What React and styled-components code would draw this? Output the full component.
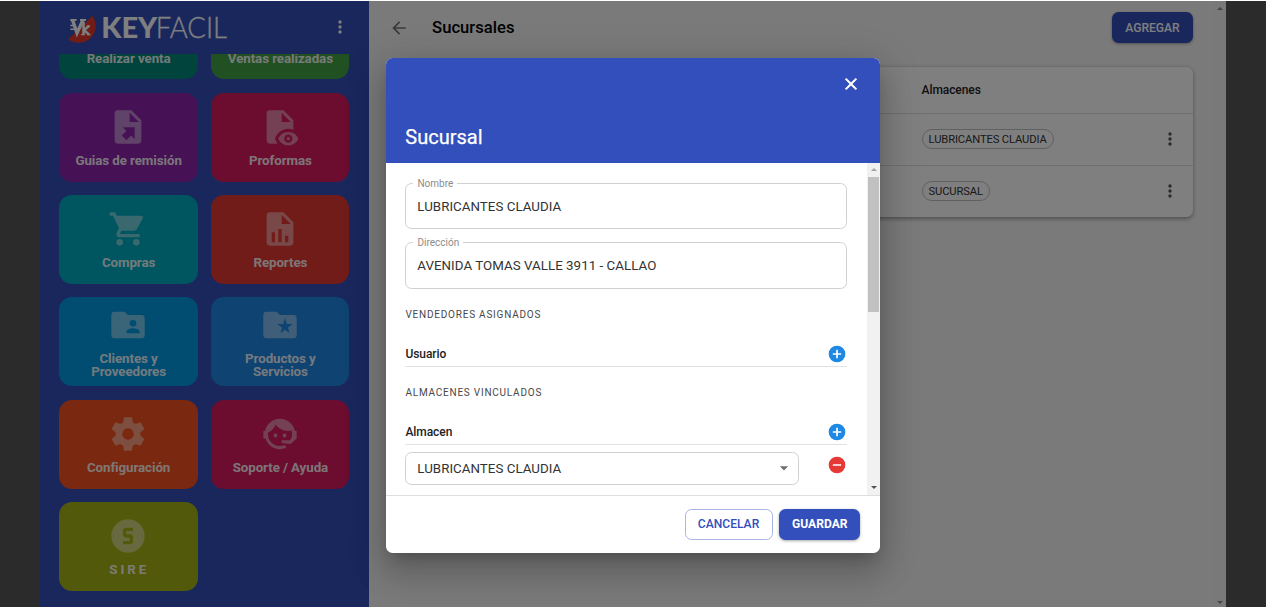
import React from "react";
import styled, { createGlobalStyle } from "styled-components";

const GlobalStyle = createGlobalStyle`
  *, *::before, *::after { box-sizing: border-box; }
  html, body { margin: 0; padding: 0; overflow: hidden; background: #fff; }
  body { font-family: Roboto, "Liberation Sans", sans-serif; }
`;

const FILE = "M6 2H14L20 8V20A2 2 0 0 1 18 22H6A2 2 0 0 1 4 20V4A2 2 0 0 1 6 2ZM13 3.5V9H18.5Z";
const FOLDER = "M20 6H12L10 4H4A2 2 0 0 0 2 6V18A2 2 0 0 0 4 20H20A2 2 0 0 0 22 18V8A2 2 0 0 0 20 6Z";

const paths = {
  fileExport: FILE + "M8.93 12.22H16V19.29L13.88 17.17L11.05 20L8.22 17.17L11.05 14.35Z",
  fileEye:
    "M17 18A1 1 0 0 1 17 20A1 1 0 0 1 17 18M17 15C14.27 15 11.94 16.66 11 19C11.94 21.34 14.27 23 17 23C19.73 23 22.06 21.34 23 19C22.06 16.66 19.73 15 17 15M17 21.5A2.5 2.5 0 0 1 17 16.5A2.5 2.5 0 0 1 17 21.5M9.27 19.7L9 19L9.27 18.31C10.47 15.14 13.5 13 17 13C18.05 13 19.07 13.21 20 13.58V8L14 2H6A2 2 0 0 0 4 4V20A2 2 0 0 0 6 22H10.5C9.99 21.41 9.57 20.5 9.27 19.7M13 3.5L18.5 9H13Z",
  cart:
    "M17 18A2 2 0 1 1 17 22A2 2 0 0 1 17 18M1 2H4.27L5.21 4H20A1 1 0 0 1 21 5C21 5.17 20.95 5.34 20.88 5.5L17.3 11.97C16.96 12.58 16.3 13 15.55 13H8.1L7.2 14.63L7.17 14.75A.25 .25 0 0 0 7.42 15H19V17H7A2 2 0 0 1 5 15C5 14.65 5.09 14.32 5.24 14.04L6.6 11.59L3 4H1V2M7 18A2 2 0 1 1 7 22A2 2 0 0 1 7 18Z",
  fileChart: FILE + "M7 20H9V14H7ZM11 20H13V12H11ZM15 20H17V16H15Z",
  folderAccount:
    FOLDER + "M19 17H11V16C11 14.67 13.67 14 15 14C16.33 14 19 14.67 19 16ZM15 9A2 2 0 0 1 15 13A2 2 0 0 1 15 9Z",
  folderStar:
    FOLDER + "M17.8 17L15 14.9L12.2 17L13.22 13.6L10.4 11.4H13.88L15 7.8L16.12 11.4H19.6L16.78 13.6Z",
  cog:
    "M12 15.5A3.5 3.5 0 0 1 12 8.5A3.5 3.5 0 0 1 12 15.5M19.43 12.97C19.47 12.65 19.5 12.33 19.5 12C19.5 11.67 19.47 11.34 19.43 11L21.54 9.37C21.73 9.22 21.78 8.95 21.66 8.73L19.66 5.27C19.54 5.05 19.27 4.96 19.05 5.05L16.56 6.05C16.04 5.66 15.5 5.32 14.87 5.07L14.5 2.42C14.46 2.18 14.25 2 14 2H10C9.75 2 9.54 2.18 9.5 2.42L9.13 5.07C8.5 5.32 7.96 5.66 7.44 6.05L4.95 5.05C4.73 4.96 4.46 5.05 4.34 5.27L2.34 8.73C2.21 8.95 2.27 9.22 2.46 9.37L4.57 11C4.53 11.34 4.5 11.67 4.5 12C4.5 12.33 4.53 12.65 4.57 12.97L2.46 14.63C2.27 14.78 2.21 15.05 2.34 15.27L4.34 18.73C4.46 18.95 4.73 19.03 4.95 18.95L7.44 17.94C7.96 18.34 8.5 18.68 9.13 18.93L9.5 21.58C9.54 21.82 9.75 22 10 22H14C14.25 22 14.46 21.82 14.5 21.58L14.87 18.93C15.5 18.67 16.04 18.34 16.56 17.94L19.05 18.95C19.27 19.03 19.54 18.95 19.66 18.73L21.66 15.27C21.78 15.05 21.73 14.78 21.54 14.63Z",
  agent:
    "M18.72 14.76C19.07 13.91 19.26 13 19.26 12C19.26 11.28 19.15 10.59 18.96 9.95C18.31 10.1 17.63 10.18 16.92 10.18C13.86 10.18 11.15 8.67 9.5 6.34C8.61 8.5 6.91 10.26 4.77 11.22C4.73 11.47 4.73 11.74 4.73 12A7.27 7.27 0 0 0 12 19.27C13.05 19.27 14.06 19.04 14.97 18.63C15.54 19.72 15.8 20.26 15.78 20.26C14.14 20.81 12.87 21.08 12 21.08C9.58 21.08 7.27 20.13 5.57 18.42C4.53 17.38 3.76 16.11 3.33 14.73H2V10.18H3.09C3.93 6.04 7.6 2.92 12 2.92C14.4 2.92 16.71 3.87 18.42 5.58C19.69 6.84 20.54 8.45 20.89 10.18H22V14.73H21.94L18.38 18L13.08 17.4V15.73H17.91L18.72 14.76M9.27 11.77A1.14 1.14 0 0 1 9.27 14.05A1.14 1.14 0 0 1 9.27 11.77M14.72 11.77A1.14 1.14 0 0 1 14.72 14.05A1.14 1.14 0 0 1 14.72 11.77Z",
  sCircle:
    "M11 7A2 2 0 0 0 9 9V11A2 2 0 0 0 11 13H13V15H9V17H13A2 2 0 0 0 15 15V13A2 2 0 0 0 13 11H11V9H15V7H11M12 2A10 10 0 0 1 12 22A10 10 0 0 1 12 2Z",
  dots:
    "M12 8A2 2 0 1 0 12 4A2 2 0 0 0 12 8M12 10A2 2 0 1 0 12 14A2 2 0 0 0 12 10M12 16A2 2 0 1 0 12 20A2 2 0 0 0 12 16Z",
  back: "M20 11H7.83L13.42 5.41L12 4L4 12L12 20L13.41 18.59L7.83 13H20Z",
  close:
    "M19.3 6.41L17.59 4.7L12 10.29L6.41 4.7L4.7 6.41L10.29 12L4.7 17.59L6.41 19.3L12 13.71L17.59 19.3L19.3 17.59L13.71 12Z",
  add: "M12 2A10 10 0 0 0 12 22A10 10 0 0 0 12 2M17 13H13V17H11V13H7V11H11V7H13V11H17Z",
  remove: "M12 2A10 10 0 0 0 12 22A10 10 0 0 0 12 2M17 13H7V11H17Z",
  down: "M7 10L12 15L17 10Z",
};

const Svg = styled.svg`
  display: block;
  flex: none;
  width: ${(p) => p.$size}px;
  height: ${(p) => p.$size}px;
  fill: currentColor;
`;
const Icon = ({ name, size = 20 }) => (
  <Svg $size={size} viewBox="0 0 24 24">
    <path fillRule="evenodd" d={paths[name]} />
  </Svg>
);

const Screen = styled.div`
  position: relative;
  width: 1266px;
  height: 607px;
  padding-top: 1px;
  overflow: hidden;
  background: #fff;
`;
const Desktop = styled.div`
  display: flex;
  justify-content: center;
  height: 606px;
  background: #565656;
`;
const Workspace = styled.div`
  display: flex;
  width: 1186.5px;
  height: 100%;
  background: #f5f5f5;
`;
const Sidebar = styled.aside`
  width: 329.3px;
  height: 606px;
  flex: none;
  overflow: hidden;
  background: #334fbb;
`;
const Brand = styled.div`
  display: flex;
  align-items: center;
  justify-content: space-between;
  height: 53px;
  padding: 0 19.5px 1px 22px;
  color: #fff;
`;
const TileArea = styled.div`
  height: 553px;
  overflow: hidden;
`;
const Tiles = styled.div`
  display: grid;
  grid-template-columns: 138.5px 138.5px;
  grid-auto-rows: 89px;
  gap: 13.3px;
  margin: -63.6px 0 0 19.3px;
`;
const Tile = styled.div`
  display: flex;
  flex-direction: column;
  align-items: center;
  justify-content: center;
  gap: 7px;
  border-radius: 13px;
  background: ${(p) => p.$color};
  color: rgba(255, 255, 255, 0.45);
`;
const TileLabel = styled.div`
  width: 122px;
  font-size: 13.33px;
  font-weight: 700;
  line-height: 13.33px;
  text-align: center;
  white-space: pre-line;
  letter-spacing: ${(p) => (p.$spaced ? 3 : -0.08)}px;
  padding-left: ${(p) => (p.$spaced ? 2 : 0.6)}px;
  color: rgba(255, 255, 255, 0.93);
`;
const Main = styled.main`
  flex: 1;
  min-width: 0;
  padding: 10px 20px 0 20px;
`;
const TopBar = styled.header`
  display: flex;
  align-items: center;
  height: 33px;
  color: #757575;
`;
const PageTitle = styled.h1`
  flex: 1;
  margin: 0 0 0 23px;
  font-size: 16.67px;
  font-weight: 500;
  color: #000;
`;
const Button = styled.button`
  height: 30.6px;
  width: ${(p) => p.$w}px;
  padding: 0;
  border-radius: 6.5px;
  border: ${(p) => (p.$outline ? "1px solid #a9b5e2" : "0")};
  background: ${(p) => (p.$outline ? "#fff" : "#334fbb")};
  color: ${(p) => (p.$outline ? "#334fbb" : "#fff")};
  box-shadow: ${(p) => (p.$outline ? "none" : "0 1px 3px rgba(0,0,0,.35)")};
  font: ${(p) => (p.$bold ? 700 : 500)} 12.1px/14px Roboto, sans-serif;
`;
const Table = styled.section`
  margin-top: 23.4px;
  border-radius: 6.5px;
  background: #fff;
  box-shadow: 0 1.5px 4px rgba(0, 0, 0, 0.35);
`;
const Row = styled.div`
  display: flex;
  align-items: center;
  height: ${(p) => (p.$head ? 46.4 : 51.8)}px;
  padding: 0 13px 0 532.5px;
  border-bottom: ${(p) => (p.$last ? "0" : "1px solid #dedede")};
  color: #555;
`;
const HeadCell = styled.div`
  font-size: 12px;
  font-weight: 500;
  letter-spacing: -0.08px;
  color: #222;
`;
const Chip = styled.span`
  height: 20px;
  padding: 0 6px;
  border: 1px solid #c0c0c0;
  border-radius: 10px;
  font-size: 11.2px;
  letter-spacing: -0.12px;
  line-height: 19px;
  color: #333;
`;
const Spacer = styled.span`
  flex: 1;
`;
const ScrollTrack = styled.div`
  display: flex;
  flex-direction: column;
  flex: none;
  width: 13.5px;
  padding: ${(p) => (p.$page ? "6px 0 3px" : "5px 1px 6px")};
  background: ${(p) => (p.$page ? "#f2f2f2" : "#f1f1f1")};
`;
const Arrow = styled.i`
  flex: none;
  align-self: center;
  width: 0;
  height: 0;
  border: 3px solid transparent;
  border-top-width: ${(p) => (p.$up ? 0 : 3.5)}px;
  border-bottom-width: ${(p) => (p.$up ? 3.5 : 0)}px;
  border-top-color: ${(p) => (p.$up ? "transparent" : p.$color)};
  border-bottom-color: ${(p) => (p.$up ? p.$color : "transparent")};
`;
const Thumb = styled.div`
  height: 135px;
  margin-top: 6px;
  background: #c1c1c1;
`;
const Backdrop = styled.div`
  position: absolute;
  inset: 1px 0 0 0;
  display: flex;
  padding: 57px 0 0 385.7px;
  background: rgba(0, 0, 0, 0.5);
`;
const Dialog = styled.div`
  display: flex;
  flex-direction: column;
  width: 494.6px;
  height: 494.6px;
  border-radius: 6.5px;
  overflow: hidden;
  background: #fff;
  box-shadow: 0 9px 13px -6px rgba(0, 0, 0, 0.2), 0 20px 32px 2.5px rgba(0, 0, 0, 0.14),
    0 7.5px 38px 6.5px rgba(0, 0, 0, 0.12);
`;
const DialogHead = styled.div`
  display: flex;
  flex-direction: column;
  justify-content: space-between;
  height: 105.3px;
  flex: none;
  padding: 16px 19.6px 13px 19.6px;
  background: #334fbb;
  color: #fff;
`;
const CloseRow = styled.div`
  display: flex;
  justify-content: flex-end;
`;
const DialogTitle = styled.h2`
  margin: 0;
  font-size: 20px;
  font-weight: 400;
  line-height: 26px;
  -webkit-text-stroke: 0.25px #fff;
`;
const DialogBody = styled.div`
  display: flex;
  height: 332px;
  flex: none;
`;
const Form = styled.div`
  flex: 1;
  padding: 19.5px 20px 0 19.8px;
`;
const FieldBox = styled.div`
  position: relative;
  display: flex;
  align-items: center;
  height: 46.6px;
  margin-bottom: 12.8px;
  padding: 0 10.8px;
  border: 1px solid #d0d0d0;
  border-radius: 6.5px;
  font-size: 13.33px;
  letter-spacing: 0.03px;
  color: #333;
`;
const FieldLabel = styled.label`
  position: absolute;
  top: -7px;
  left: 7px;
  padding: 0 4px;
  background: #fff;
  font-size: 10px;
  line-height: 13px;
  letter-spacing: 0;
  color: #8c8c8c;
`;
const Overline = styled.div`
  height: 26px;
  margin-top: ${(p) => p.$mt}px;
  font-size: 10px;
  line-height: 26px;
  letter-spacing: 0.77px;
  color: #484848;
`;
const ListHead = styled.div`
  display: flex;
  align-items: center;
  justify-content: space-between;
  height: 25.5px;
  margin-top: 14px;
  border-bottom: 1px solid #e2e2e2;
  font-size: 12px;
  font-weight: 500;
  letter-spacing: -0.08px;
  color: #222;
`;
const Action = styled.span`
  color: ${(p) => p.$color};
`;
const SelectRow = styled.div`
  display: flex;
  align-items: flex-start;
  justify-content: space-between;
  margin-top: 7px;
`;
const Select = styled(FieldBox)`
  justify-content: space-between;
  width: 394px;
  height: 33px;
  margin: 0;
  padding: 0 4.5px 1px 10.8px;
`;
const Caret = styled.span`
  color: #707070;
`;
const RemoveSlot = styled(Action)`
  padding-top: 2.8px;
`;
const DialogFoot = styled.div`
  display: flex;
  flex: 1;
  align-items: center;
  justify-content: flex-end;
  gap: 6.6px;
  padding-right: 19.9px;
  border-top: 1px solid #dedede;
`;
const LogoSvg = styled.svg`
  display: block;
  width: 170px;
  height: 40px;
`;

const Logo = () => (
  <LogoSvg viewBox="0 0 170 40">
    <circle cx="18" cy="20" r="17" fill="#354fb5" />
    <path d="M30.5 8.8A17 17 0 0 1 6.3 32.2Z" fill="#e2382f" />
    <g fill="none" stroke="#fff">
      <path d="M10.5 13L15 26L21 13" strokeWidth="3.4" />
      <path d="M8.3 13H14.5M18 13H24" strokeWidth="1.8" />
      <path d="M8.3 18.6H13M8.3 22.2H14" strokeWidth="1.5" />
      <path d="M21.5 15V28M27 19L22 23L27 27.6" strokeWidth="2.5" />
      <path d="M19 27.6H23M25 27.6H28.5M25 19H28" strokeWidth="1.3" />
    </g>
    <text x="39.2" y="30.5" textLength="56" lengthAdjust="spacingAndGlyphs" fill="#fff" fontFamily="Lato" fontWeight="900" fontSize="28.5">
      KEY
    </text>
    <text x="93.8" y="30.5" textLength="71.2" lengthAdjust="spacingAndGlyphs" fill="#fff" stroke="#fff" strokeWidth="0.3" fontFamily="Lato" fontWeight="300" fontSize="28.5">
      FACIL
    </text>
  </LogoSvg>
);

const tiles = [
  ["Realizar venta", "#00897b", null],
  ["Ventas realizadas", "#43a047", null],
  ["Guias de remisión", "#8e24aa", "fileExport"],
  ["Proformas", "#d81b60", "fileEye"],
  ["Compras", "#00acc1", "cart"],
  ["Reportes", "#e53935", "fileChart"],
  ["Clientes y\nProveedores", "#039be5", "folderAccount"],
  ["Productos y\nServicios", "#1e88e5", "folderStar"],
  ["Configuración", "#f4511e", "cog"],
  ["Soporte / Ayuda", "#d81b60", "agent"],
  ["SIRE", "#a6b214", "sCircle"],
];

const Field = ({ label, value }) => (
  <FieldBox>
    <FieldLabel>{label}</FieldLabel>
    {value}
  </FieldBox>
);

export default function App() {
  return (
    <Screen>
      <GlobalStyle />
      <Desktop>
        <Workspace>
          <Sidebar>
            <Brand>
              <Logo />
              <Icon name="dots" />
            </Brand>
            <TileArea>
              <Tiles>
                {tiles.map(([label, color, icon]) => (
                  <Tile key={label} $color={color}>
                    <Icon name={icon} size={40} />
                    <TileLabel $spaced={label === "SIRE"}>{label}</TileLabel>
                  </Tile>
                ))}
              </Tiles>
            </TileArea>
          </Sidebar>
          <Main>
            <TopBar>
              <Icon name="back" />
              <PageTitle>Sucursales</PageTitle>
              <Button $w={80.5}>AGREGAR</Button>
            </TopBar>
            <Table>
              <Row $head>
                <HeadCell>Almacenes</HeadCell>
              </Row>
              <Row>
                <Chip>LUBRICANTES CLAUDIA</Chip>
                <Spacer />
                <Icon name="dots" />
              </Row>
              <Row $last>
                <Chip>SUCURSAL</Chip>
                <Spacer />
                <Icon name="dots" />
              </Row>
            </Table>
          </Main>
          <ScrollTrack $page>
            <Arrow $up $color="#8c8c8c" />
            <Spacer />
            <Arrow $color="#8c8c8c" />
          </ScrollTrack>
        </Workspace>
      </Desktop>
      <Backdrop>
        <Dialog>
          <DialogHead>
            <CloseRow>
              <Icon name="close" />
            </CloseRow>
            <DialogTitle>Sucursal</DialogTitle>
          </DialogHead>
          <DialogBody>
            <Form>
              <Field label="Nombre" value="LUBRICANTES CLAUDIA" />
              <Field label="Dirección" value="AVENIDA TOMAS VALLE 3911 - CALLAO" />
              <Overline $mt={0}>VENDEDORES ASIGNADOS</Overline>
              <ListHead>
                Usuario
                <Action $color="#1e88e5">
                  <Icon name="add" />
                </Action>
              </ListHead>
              <Overline $mt={12.5}>ALMACENES VINCULADOS</Overline>
              <ListHead>
                Almacen
                <Action $color="#1e88e5">
                  <Icon name="add" />
                </Action>
              </ListHead>
              <SelectRow>
                <Select>
                  LUBRICANTES CLAUDIA
                  <Caret>
                    <Icon name="down" />
                  </Caret>
                </Select>
                <RemoveSlot $color="#e53935">
                  <Icon name="remove" />
                </RemoveSlot>
              </SelectRow>
            </Form>
            <ScrollTrack>
              <Arrow $up $color="#a3a3a3" />
              <Thumb />
              <Spacer />
              <Arrow $color="#505050" />
            </ScrollTrack>
          </DialogBody>
          <DialogFoot>
            <Button $outline $w={88}>CANCELAR</Button>
            <Button $bold $w={81.3}>GUARDAR</Button>
          </DialogFoot>
        </Dialog>
      </Backdrop>
    </Screen>
  );
}
